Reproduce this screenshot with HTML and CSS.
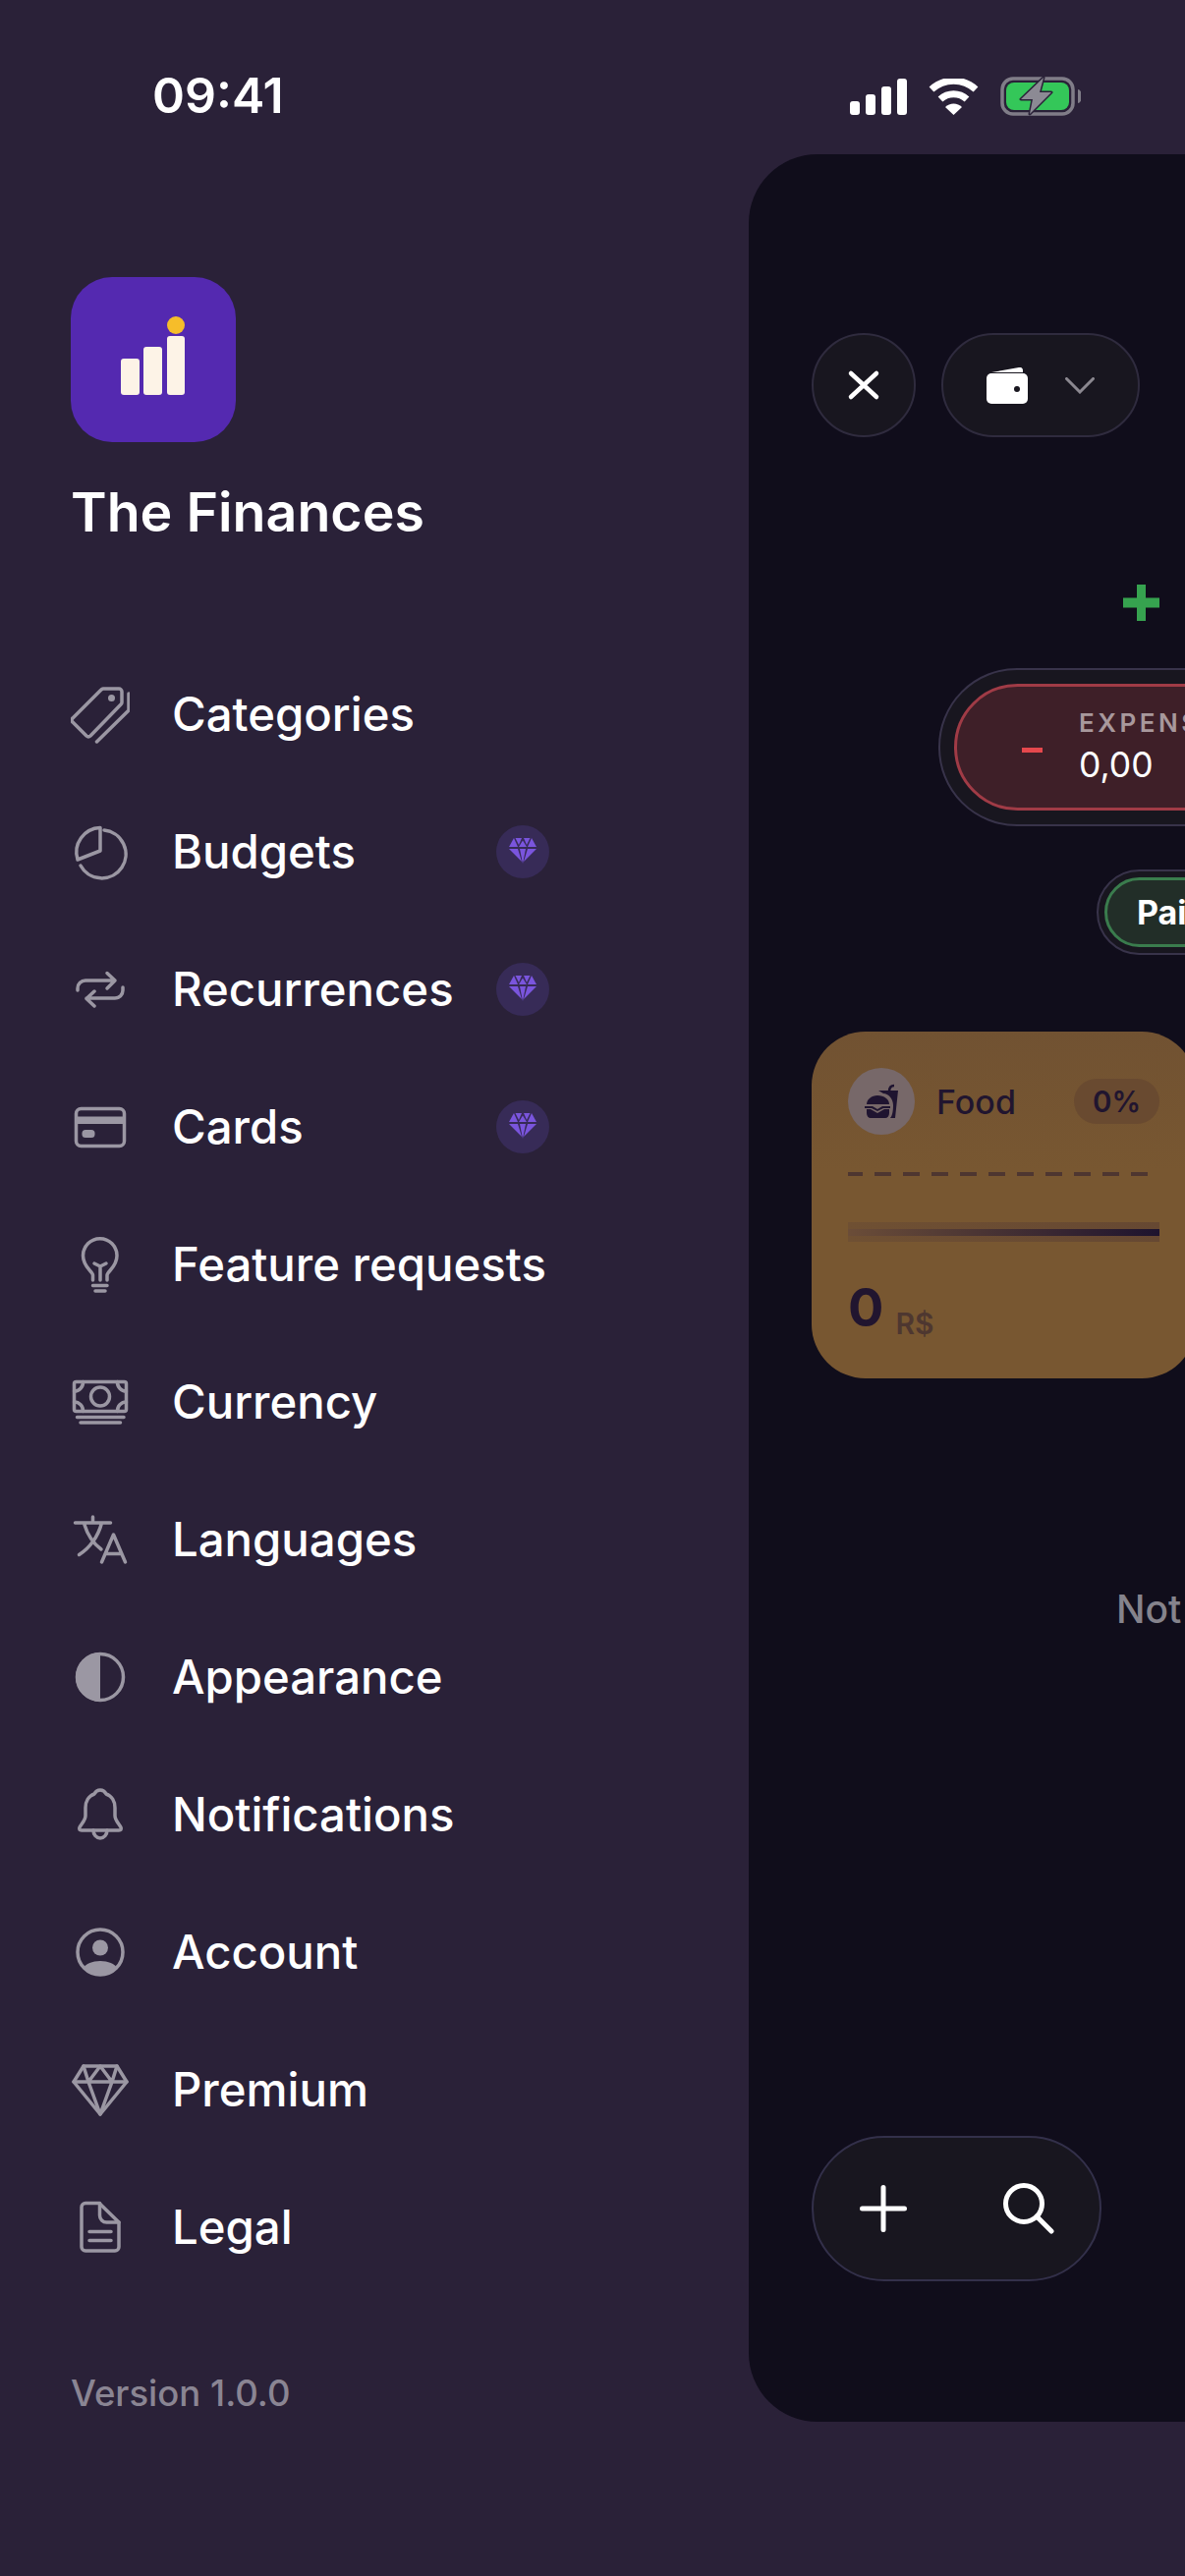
FILE: index.html
```html
<!DOCTYPE html>
<html lang="en">
<head>
    <meta charset="UTF-8">
    <meta name="viewport" content="width=device-width, initial-scale=1.0">
    <title>The Finances</title>
    <link rel="stylesheet" href="styles.css">
</head>
<body>
    <header class="status-bar">
        <span class="status-time">09:41</span>
        <div class="status-icons">
            <svg width="58" height="37" viewBox="0 0 58 37" fill="#fff">
                <rect x="0" y="23" width="10" height="14" rx="3"/>
                <rect x="16" y="16" width="10" height="21" rx="3"/>
                <rect x="32" y="8" width="10" height="29" rx="3"/>
                <rect x="48" y="0" width="10" height="37" rx="3"/>
            </svg>
            <svg width="51" height="37" viewBox="0 0 51 37" fill="none" stroke="#fff" stroke-width="7">
                <path d="M3 11 A33 33 0 0 1 48 11"/>
                <path d="M12 21 A20 20 0 0 1 39 21"/>
                <path d="M17 29 A12 12 0 0 1 34 29 L25.500 37 Z" fill="#fff" stroke="none"/>
            </svg>
            <svg width="82" height="40" viewBox="0 0 82 40">
                <rect x="2" y="2" width="72" height="36" rx="11" fill="none" stroke="#807d88" stroke-width="3.500"/>
                <rect x="6" y="6" width="64" height="28" rx="8" fill="#34c759"/>
                <path d="M79 13 a4 7 0 0 1 0 14 Z" fill="#807d88"/>
                <path d="M44 1 L21 23 H33 L30 38 L52 16 H40 Z" fill="#8c8a94" stroke="#2a2138" stroke-width="3" stroke-linejoin="round" paint-order="stroke"/>
            </svg>
        </div>
    </header>

    <div class="layout">
        <nav class="sidebar">
            <svg class="logo" width="168" height="168" viewBox="0 0 168 168">
                <rect width="168" height="168" rx="42" fill="#5429b0"/>
                <rect x="51" y="83" width="19" height="37" rx="3" fill="#fdf3e7"/>
                <rect x="74" y="71" width="19" height="49" rx="3" fill="#fdf3e7"/>
                <rect x="98" y="60" width="18" height="60" rx="3" fill="#fdf3e7"/>
                <circle cx="107" cy="49" r="9" fill="#f6bd2a"/>
            </svg>
            <h1 class="app-name">The Finances</h1>

            <ul class="menu">
                <li class="menu-item">
                    <svg class="menu-icon" viewBox="0 0 60 60">
                        <path d="M33 4 H49 a3 3 0 0 1 3 3 V18 a3 3 0 0 1 -1 2 L20 52 a3 3 0 0 1 -4 0 L2 38 a2.500 2.500 0 0 1 0 -4 L31 5 a3 3 0 0 1 2 -1 Z"/>
                        <circle cx="41.500" cy="13.500" r="3.500" class="solid"/>
                        <path d="M59 9 V26 L26.500 58"/>
                    </svg>
                    <span class="menu-label">Categories</span>
                </li>
                <li class="menu-item">
                    <svg class="menu-icon" viewBox="0 0 60 60">
                        <path d="M34 8 A24.500 24.500 0 1 1 10 44"/>
                        <path d="M30 5.500 V29 L7 38 A25 25 0 0 1 30 5.500 Z"/>
                    </svg>
                    <span class="menu-label">Budgets</span>
                    <span class="gem-badge">
                        <svg viewBox="0 0 54 54"><use href="#gem"/></svg>
                    </span>
                </li>
                <li class="menu-item">
                    <svg class="menu-icon" viewBox="0 0 60 60">
                        <path d="M7 31 V29 a8 8 0 0 1 8 -8 H45 M37 13.500 L45 21 L37 29"/>
                        <path d="M53 28 V31 a8 8 0 0 1 -8 8 H16 M24 32 L16 39.500 L24 47"/>
                    </svg>
                    <span class="menu-label">Recurrences</span>
                    <span class="gem-badge">
                        <svg viewBox="0 0 54 54"><use href="#gem"/></svg>
                    </span>
                </li>
                <li class="menu-item">
                    <svg class="menu-icon" viewBox="0 0 60 60">
                        <rect x="5.500" y="11.500" width="49" height="38" rx="5"/>
                        <rect x="5" y="19.500" width="50" height="7.500" class="solid"/>
                        <rect x="11.500" y="33" width="13" height="8" rx="3.500" class="solid"/>
                    </svg>
                    <span class="menu-label">Cards</span>
                    <span class="gem-badge">
                        <svg viewBox="0 0 54 54"><use href="#gem"/></svg>
                    </span>
                </li>
                <li class="menu-item">
                    <svg class="menu-icon" viewBox="0 0 60 60">
                        <path d="M22.500 46 V41 C22.500 37 12.500 33 12.500 21 A17.250 17.250 0 0 1 47 21 C47 33 37 37 37 41 V46"/>
                        <path d="M24 29 L30 32 L36 29 M30 32 V46"/>
                        <path d="M22.500 51.500 H37 M25 57 H35"/>
                    </svg>
                    <span class="menu-label">Feature requests</span>
                </li>
                <li class="menu-item">
                    <svg class="menu-icon" viewBox="0 0 60 60">
                        <rect x="3.500" y="9.500" width="53" height="30" rx="2"/>
                        <circle cx="30" cy="24.500" r="9.500"/>
                        <path d="M3.500 19 a9 9 0 0 0 9 -9.500 M56.500 19 a9 9 0 0 1 -9 -9.500 M3.500 30 a9 9 0 0 1 9 9.500 M56.500 30 a9 9 0 0 0 -9 9.500"/>
                        <path d="M6.500 45.500 H54 M10 51 H50.500"/>
                    </svg>
                    <span class="menu-label">Currency</span>
                </li>
                <li class="menu-item">
                    <svg class="menu-icon" viewBox="0 0 60 60">
                        <path d="M22.500 7 V13 M4.500 13 H40.500 M31.500 13 C28 27 19 39 8.500 45.500 M14 15 C17 25 23 34 31 40"/>
                        <path d="M31.500 53 L43.500 25 L55.500 53 M35.500 44.500 H51.500"/>
                    </svg>
                    <span class="menu-label">Languages</span>
                </li>
                <li class="menu-item">
                    <svg class="menu-icon" viewBox="0 0 60 60">
                        <circle cx="30" cy="30" r="23.500"/>
                        <path d="M30 5 A25 25 0 0 0 30 55 Z" class="solid"/>
                    </svg>
                    <span class="menu-label">Appearance</span>
                </li>
                <li class="menu-item">
                    <svg class="menu-icon" viewBox="0 0 60 60">
                        <path d="M30 5 C33 5 35 7 36 9 C42 11 45 17 45 23 V31 C45 36 49 39 51 43 C52 45 51 46 49 46 H11 C9 46 8 45 9 43 C11 39 15 36 15 31 V23 C15 17 18 11 24 9 C25 7 27 5 30 5 Z"/>
                        <path d="M23 46 a7 8 0 0 0 14 0"/>
                    </svg>
                    <span class="menu-label">Notifications</span>
                </li>
                <li class="menu-item">
                    <svg class="menu-icon" viewBox="0 0 60 60">
                        <circle cx="30" cy="30" r="23"/>
                        <circle cx="30" cy="25.500" r="8" class="solid"/>
                        <path d="M13 46 C15 42 22 39 30 39 C38 39 45 42 47 46 A23 23 0 0 1 13 46 Z" class="solid"/>
                    </svg>
                    <span class="menu-label">Account</span>
                </li>
                <li class="menu-item">
                    <svg class="menu-icon" viewBox="0 0 60 60">
                        <path d="M13 6 H47 L57 22 L30 55 L3 22 Z"/>
                        <path d="M3 22 H57 M13 6 L18 22 L30 6 L42 22 L47 6 M18 22 L30 55 L42 22"/>
                    </svg>
                    <span class="menu-label">Premium</span>
                </li>
                <li class="menu-item">
                    <svg class="menu-icon" viewBox="0 0 60 60">
                        <path d="M15 5.500 H29 L49 25 V50 a4 4 0 0 1 -4 4 H15 a4 4 0 0 1 -4 -4 V9.500 a4 4 0 0 1 4 -4 Z"/>
                        <path d="M29.500 5.500 V18 a7 7 0 0 0 7 7 H49"/>
                        <path d="M19 34.500 H41 M19 43.500 H41"/>
                    </svg>
                    <span class="menu-label">Legal</span>
                </li>
            </ul>

            <p class="version">Version 1.0.0</p>
        </nav>

        <main class="panel">
            <div class="top-actions">
                <button class="round-btn">
                    <svg width="34" height="32" viewBox="0 0 34 32" fill="none" stroke="#fff" stroke-width="4.500" stroke-linecap="round">
                        <path d="M4 4 L30 28 M30 4 L4 28"/>
                    </svg>
                </button>
                <button class="wallet-btn">
                    <svg width="42" height="37" viewBox="0 0 42 37">
                        <path d="M5 5 L33 0 a3 3 0 0 1 4 3 V5 Z" fill="#fff"/>
                        <rect x="0" y="6" width="42" height="31" rx="5" fill="#fff"/>
                        <circle cx="31" cy="22" r="3" fill="#18161f"/>
                    </svg>
                    <svg width="30" height="17" viewBox="0 0 30 17" fill="none" stroke="#8b8890" stroke-width="3" stroke-linecap="round">
                        <path d="M1.500 1.500 L15 15 L28.500 1.500"/>
                    </svg>
                </button>
            </div>

            <svg class="income-plus" width="37" height="37" viewBox="0 0 37 37" fill="#36a24f">
                <rect x="14" y="0" width="9" height="37"/>
                <rect x="0" y="13.500" width="37" height="10"/>
            </svg>

            <div class="pill-track expense-track">
                <div class="expense-pill">
                    <span class="minus"></span>
                    <div>
                        <div class="expense-label">EXPENS</div>
                        <div class="expense-value">0,00</div>
                    </div>
                </div>
            </div>

            <div class="pill-track paid-track">
                <div class="paid-pill">Pai</div>
            </div>

            <section class="category-card">
                <div class="card-head">
                    <span class="card-icon">
                        <svg width="68" height="68" viewBox="0 0 68 68" fill="#1f1430">
                            <path d="M31 23 H51 L48 51 H43 C45 49 46 44 46 38 C46 31 41 26 36 26 Z"/>
                            <path d="M42 24 C42 20 44 18 47 18" fill="none" stroke="#1f1430" stroke-width="2.500"/>
                            <path d="M19 37 C19 32 24 28 30 28 C37 28 42 32 42 37 Z"/>
                            <path d="M17 39 H25 L30 42 L35 39 H43 V41 H36 L30 44 L24 41 H17 Z"/>
                            <path d="M19 42 H23 L30 46 L37 42 H42 V46 C42 49 40 51 38 51 H23 C21 51 19 49 19 46 Z"/>
                        </svg>
                    </span>
                    <span class="card-name">Food</span>
                    <span class="card-percent">0%</span>
                </div>
                <div class="card-dashes"></div>
                <div class="card-progress"><div class="card-progress-bar"></div></div>
                <div class="card-amount">
                    <span class="amount-value">0</span>
                    <span class="amount-currency">R$</span>
                </div>
            </section>

            <p class="empty-note">Not</p>

            <div class="bottom-actions">
                <svg width="48" height="48" viewBox="0 0 48 48" fill="none" stroke="#fff" stroke-width="5" stroke-linecap="round">
                    <path d="M24 2.500 V45.500 M2.500 24 H45.500"/>
                </svg>
                <svg width="52" height="52" viewBox="0 0 52 52" fill="none" stroke="#fff" stroke-width="5" stroke-linecap="round">
                    <circle cx="21" cy="21" r="18.500"/>
                    <path d="M34 34 L49 49"/>
                </svg>
            </div>
        </main>
    </div>

    <svg class="defs" width="0" height="0">
        <g id="gem" fill="#7a55dd">
            <polygon points="13,22 18,13 22,22"/>
            <polygon points="19.500,13 26,13 23,20"/>
            <polygon points="27,15.500 31,22 23,22"/>
            <polygon points="28,13 34.500,13 31,20"/>
            <polygon points="36,13 41,22 32,22"/>
            <polygon points="13,24 22,24 26,37"/>
            <polygon points="24,24 30,24 27,39"/>
            <polygon points="32,24 41,24 28,37"/>
        </g>
    </svg>
</body>
</html>
```
FILE: styles.css
```css
* {
    box-sizing: border-box;
}

html,
body {
    margin: 0;
    height: 100%;
}

body {
    width: 1206px;
    height: 2622px;
    overflow: hidden;
    background-color: #2a2138;
    color: #fff;
    font-family: Inter, "Noto Sans", sans-serif;
}

.defs {
    display: block;
}

/* status bar */
.status-bar {
    height: 157px;
    padding: 78px 106px 0 155px;
    display: flex;
    justify-content: space-between;
    align-items: flex-start;
}

.status-time {
    font-size: 50px;
    line-height: 39px;
    font-weight: 600;
}

.status-icons {
    display: flex;
    align-items: center;
    gap: 22px;
}

.status-icons svg {
    display: block;
}

.layout {
    display: flex;
    height: 2308px;
}

/* left menu */
.sidebar {
    flex: 0 0 762px;
    padding: 125px 0 0 72px;
}

.logo {
    display: block;
}

.app-name {
    margin: 44px 0 0;
    font-size: 55.500px;
    line-height: 54px;
    font-weight: 600;
    white-space: nowrap;
}

.menu {
    list-style: none;
    width: 487px;
    margin: 109px 0 0;
    padding: 0;
}

.menu-item {
    height: 140px;
    display: flex;
    align-items: center;
    font-size: 47.300px;
    font-weight: 500;
}

.menu-label {
    margin-top: -2px;
    white-space: nowrap;
}

.menu-icon {
    flex: none;
    width: 60px;
    height: 60px;
    margin-right: 43px;
    fill: none;
    stroke: #9b97a3;
    stroke-width: 3.500;
    stroke-linecap: round;
    stroke-linejoin: round;
}

.menu-icon .solid {
    fill: #9b97a3;
    stroke: none;
}

.gem-badge {
    margin-left: auto;
    width: 54px;
    height: 54px;
    border-radius: 50%;
    background-color: #372b57;
}

.gem-badge svg {
    display: block;
    width: 54px;
    height: 54px;
}

.version {
    margin: 79px 0 0;
    font-size: 36.500px;
    line-height: 40px;
    font-weight: 500;
    color: #8a8593;
}

/* right panel */
.panel {
    flex: 0 0 800px;
    display: flex;
    flex-direction: column;
    align-items: flex-start;
    padding: 182px 0 143px 64px;
    background-color: #100d1b;
    border-radius: 70px 0 0 70px;
}

.top-actions {
    display: flex;
    gap: 26px;
}

.round-btn,
.wallet-btn {
    height: 106px;
    display: flex;
    align-items: center;
    justify-content: center;
    padding: 0;
    background-color: #18161f;
    border: 2px solid #2f2b3e;
    border-radius: 53px;
}

.round-btn {
    width: 106px;
}

.wallet-btn {
    width: 202px;
    gap: 38px;
}

.income-plus {
    margin: 150px 0 0 317px;
    flex: none;
}

.pill-track {
    flex: none;
    background-color: #18161f;
    border: 2px solid #38334a;
}

.expense-track {
    width: 500px;
    height: 161px;
    margin: 48px 0 0 129px;
    padding: 14px;
    border-radius: 80px;
}

.expense-pill {
    height: 129px;
    display: flex;
    align-items: center;
    padding-left: 66px;
    background-color: #3e1f28;
    border: 3px solid #a03b46;
    border-radius: 65px;
}

.minus {
    width: 21px;
    height: 5px;
    margin: 6px 37px 0 0;
    background-color: #e5484d;
}

.expense-label {
    font-size: 26px;
    line-height: 30px;
    font-weight: 600;
    letter-spacing: 3.500px;
    color: #a8989c;
    white-space: nowrap;
}

.expense-value {
    margin-top: 6px;
    font-size: 35.500px;
    line-height: 44px;
}

.paid-track {
    width: 300px;
    height: 87px;
    margin: 44px 0 0 290px;
    padding: 6px;
    border-radius: 44px;
}

.paid-pill {
    height: 71px;
    padding-left: 30px;
    background-color: #222e28;
    border: 3px solid #3a7c4d;
    border-radius: 36px;
    font-size: 34px;
    line-height: 65px;
    font-weight: 700;
}

/* category card */
.category-card {
    flex: none;
    width: 391px;
    height: 353px;
    margin-top: 78px;
    padding: 37px 37px 0;
    background-image: linear-gradient(#715232, #785731 40%);
    border-radius: 55px;
    color: #21152f;
}

.card-head {
    display: flex;
    align-items: center;
}

.card-icon {
    width: 68px;
    height: 68px;
    margin-right: 22px;
    border-radius: 50%;
    background-color: #776869;
}

.card-icon svg {
    display: block;
}

.card-name {
    font-size: 34px;
    font-weight: 500;
}

.card-percent {
    margin-left: auto;
    width: 87px;
    height: 46px;
    border-radius: 23px;
    background-color: #694a30;
    font-size: 29.500px;
    line-height: 46px;
    font-weight: 600;
    text-align: center;
}

.card-dashes {
    width: 305px;
    height: 4px;
    margin-top: 38px;
    background-image: linear-gradient(90deg, #4e3630 17px, transparent 17px);
    background-size: 29px 4px;
    background-position: -2px 0;
}

.card-progress {
    height: 20px;
    margin-top: 47px;
    display: flex;
    align-items: center;
    background-image: linear-gradient(90deg, #6f5033, #664832);
}

.card-progress-bar {
    width: 100%;
    height: 7px;
    background-image: linear-gradient(90deg, #6b4d38, #1e132e);
}

.card-amount {
    display: flex;
    align-items: flex-start;
    gap: 12px;
    margin-top: 40px;
}

.amount-value {
    font-size: 54px;
    line-height: 54px;
    font-weight: 700;
}

.amount-currency {
    margin-top: 28px;
    font-size: 30px;
    line-height: 30px;
    font-weight: 600;
    color: #4e3730;
}

.empty-note {
    flex: none;
    margin: 212px 0 0 310px;
    font-size: 39px;
    line-height: 46px;
    font-weight: 500;
    color: #85838c;
}

.bottom-actions {
    flex: none;
    width: 295px;
    height: 148px;
    margin-top: auto;
    display: flex;
    align-items: center;
    gap: 98px;
    padding-left: 47px;
    background-color: #18161f;
    border: 2px solid #33304a;
    border-radius: 74px;
}
```
